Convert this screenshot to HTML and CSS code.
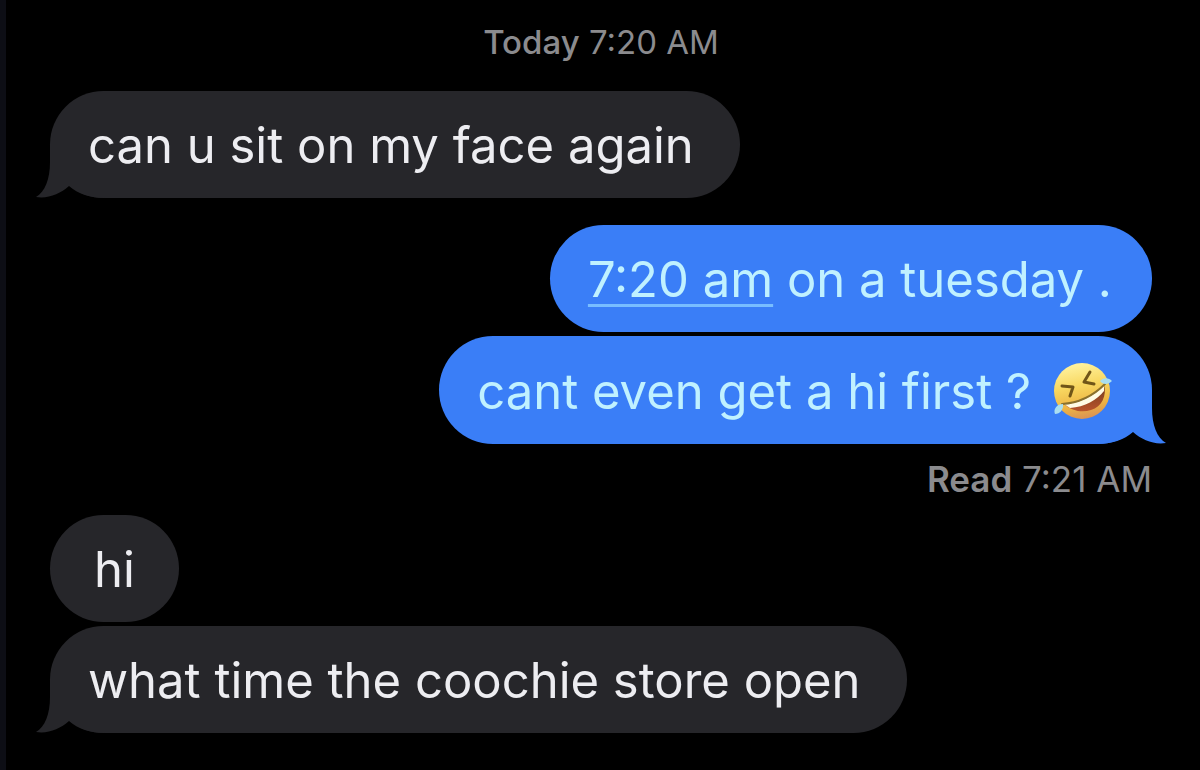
FILE: index.html
```
<!DOCTYPE html>
<html lang="en">
<head>
<meta charset="utf-8">
<meta name="viewport" content="width=device-width, initial-scale=1">
<title>Messages</title>
<link rel="stylesheet" href="styles.css">
</head>
<body>
<main class="chat">
  <p class="stamp"><span class="stamp-label">Today</span> 7:20 AM</p>

  <section class="group">
    <div class="bubble received long">
      <span>can u sit on my face again</span>
      <svg class="tail" viewBox="0 0 70 54" aria-hidden="true"><path d="M14 0V18C14 35 9 48 0 53C12 55 24 50 33 42C42 50 54 54 70 54V0Z"/></svg>
    </div>
  </section>

  <section class="group outgoing">
    <div class="bubble sent">
      <span><a class="time-link" href="#">7:20 am</a> on a tuesday .</span>
    </div>
    <div class="bubble sent">
      <span>cant even get a hi first ?</span>
      <svg class="emoji" viewBox="0 0 60 60" role="img" aria-label="rolling on the floor laughing">
        <defs>
          <linearGradient id="skin" x1="0.4" y1="0" x2="0.6" y2="1">
            <stop offset="0" stop-color="#fff3a0"/>
            <stop offset="0.4" stop-color="#f8d760"/>
            <stop offset="0.75" stop-color="#edb443"/>
            <stop offset="1" stop-color="#d99055"/>
          </linearGradient>
          <linearGradient id="mouth" x1="0" y1="0" x2="0" y2="1">
            <stop offset="0" stop-color="#743c1e"/>
            <stop offset="1" stop-color="#b9542c"/>
          </linearGradient>
        </defs>
        <circle cx="30" cy="30" r="28" fill="url(#skin)"/>
        <path d="M12 43C27 43 43 34 52 24C55 34 50 46 39 49C30 52 20 50 12 43Z" fill="url(#mouth)"/>
        <path d="M12 43C27 43 43 34 52 24L52 30C45 39 33 46 18 47Z" fill="#fffbe4"/>
        <path d="M10 43C27 42 42 34 53 23" fill="none" stroke="#8a702c" stroke-width="2" stroke-linecap="round"/>
        <path d="M10 25L21 26L18 35M38 11L32 21L42 23" fill="none" stroke="#705518" stroke-width="3" stroke-linecap="round" stroke-linejoin="round"/>
        <path d="M48 20C52 16 57 17 60 20C56 24 51 24 48 20ZM11 43C12 48 8 53 3 53C1 48 5 43 11 43Z" fill="#a9def0"/>
      </svg>
      <svg class="tail" viewBox="0 0 70 54" aria-hidden="true"><path d="M14 0V18C14 35 9 48 0 53C12 55 24 50 33 42C42 50 54 54 70 54V0Z"/></svg>
    </div>
  </section>

  <p class="receipt"><span class="receipt-label">Read</span> 7:21 AM</p>

  <section class="group">
    <div class="bubble received"><span>hi</span></div>
    <div class="bubble received long">
      <span>what time the coochie store open</span>
      <svg class="tail" viewBox="0 0 70 54" aria-hidden="true"><path d="M14 0V18C14 35 9 48 0 53C12 55 24 50 33 42C42 50 54 54 70 54V0Z"/></svg>
    </div>
  </section>
</main>
</body>
</html>
```
FILE: styles.css
```
* {
  box-sizing: border-box;
}

body {
  margin: 0;
  background: #000;
  color: #ededf1;
  font-family: Inter, "Liberation Sans", sans-serif;
}

.chat {
  min-height: 100vh;
  padding: 26px 48px 36px 44px;
  border-left: 6px solid #0d0e15;
  display: flex;
  flex-direction: column;
}

.stamp,
.receipt {
  margin: 0;
  color: #8b8b8e;
  line-height: 32px;
}

.stamp {
  margin-bottom: 33px;
  font-size: 33px;
  text-align: center;
}

.stamp-label {
  font-weight: 500;
}

.receipt {
  margin: 19px 0 20px;
  font-size: 35px;
  text-align: right;
}

.receipt-label {
  font-weight: 600;
}

.group {
  display: flex;
  flex-direction: column;
  align-items: flex-start;
  gap: 4px;
}

.outgoing {
  margin-top: 27px;
  align-items: flex-end;
}

.bubble {
  position: relative;
  isolation: isolate;
  display: flex;
  align-items: center;
  justify-content: center;
  min-width: 129px;
  padding: 25px 38px 23px;
  border-radius: 54px;
  font-size: 49px;
  line-height: 59px;
}

.received {
  background: #26262a;
  fill: #26262a;
}

.long {
  padding-right: 46px;
}

.sent {
  padding-right: 40px;
  background: #3a7ef7;
  fill: #3a7ef7;
  color: #c0f1ff;
}

.time-link {
  color: inherit;
  text-decoration: underline;
  text-decoration-color: #78bdff;
  text-decoration-thickness: 3px;
  text-underline-offset: 7px;
}

.emoji {
  flex: none;
  width: 60px;
  height: 60px;
  margin-left: 21px;
}

/* Sits above the bubble's background and below its text. */
.tail {
  position: absolute;
  z-index: -1;
  bottom: 0;
  left: -14px;
  width: 70px;
  height: 54px;
}

.sent .tail {
  left: auto;
  right: -14px;
  transform: scaleX(-1);
}
```
